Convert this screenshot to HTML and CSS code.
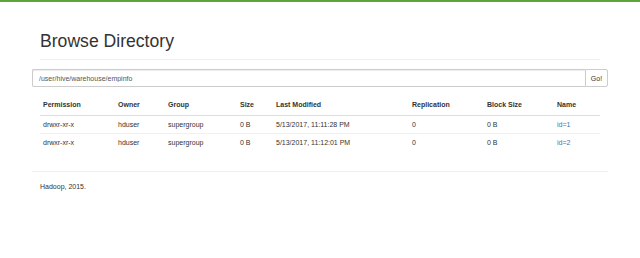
FILE: index.html
```html
<!DOCTYPE html>
<html lang="en">
<head>
    <meta charset="UTF-8">
    <meta name="viewport" content="width=device-width, initial-scale=1.0">
    <title>Browsing HDFS</title>
    <link rel="stylesheet" href="styles.css">
</head>
<body>

    <div class="topbar"></div>

    <div class="container">
        <div class="page-header">
            <h1>Browse Directory</h1>
        </div>

        <!-- Path box -->
        <form class="path-form" onsubmit="return false;">
            <input type="text" class="path-input" value="/user/hive/warehouse/empinfo">
            <button class="go-btn">Go!</button>
        </form>

        <!-- Directory listing -->
        <table class="listing">
            <thead>
                <tr>
                    <th class="col-perm">Permission</th>
                    <th class="col-owner">Owner</th>
                    <th class="col-group">Group</th>
                    <th class="col-size">Size</th>
                    <th class="col-mod">Last Modified</th>
                    <th class="col-rep">Replication</th>
                    <th class="col-block">Block Size</th>
                    <th class="col-name">Name</th>
                </tr>
            </thead>
            <tbody>
                <tr>
                    <td>drwxr-xr-x</td>
                    <td>hduser</td>
                    <td>supergroup</td>
                    <td>0 B</td>
                    <td>5/13/2017, 11:11:28 PM</td>
                    <td>0</td>
                    <td>0 B</td>
                    <td><a href="#">id=1</a></td>
                </tr>
                <tr>
                    <td>drwxr-xr-x</td>
                    <td>hduser</td>
                    <td>supergroup</td>
                    <td>0 B</td>
                    <td>5/13/2017, 11:12:01 PM</td>
                    <td>0</td>
                    <td>0 B</td>
                    <td><a href="#">id=2</a></td>
                </tr>
            </tbody>
        </table>

        <hr class="footer-rule">
        <p class="footer">Hadoop, 2015.</p>
    </div>

</body>
</html>
```

FILE: styles.css
```css
body {
    font-family: 'Liberation Sans', Arial, sans-serif;
    font-size: 7px;
    line-height: 10px;
    color: #333;
    background-color: #fff;
    margin: 0;
    padding: 0;
}

.topbar {
    height: 2px;
    background-color: #5fa33e; /* Hadoop green */
}

.container {
    width: 576px;
    margin: 0 32px;
}

.page-header {
    margin: 0 8px;
    padding-bottom: 4px;
    border-bottom: 1px solid #eee;
}

h1 {
    font-size: 17.6px;
    font-weight: 500;
    line-height: 20px;
    margin: 29px 0 4px;
    color: #333;
}

.path-form {
    display: flex;
    margin-top: 9px;
}

.path-input {
    flex: 1;
    height: 18px;
    box-sizing: border-box;
    padding: 0 6px;
    font-family: inherit;
    font-size: 7px;
    color: #555;
    border: 1px solid #ccc;
    border-right: none;
    border-radius: 2px 0 0 2px;
    box-shadow: inset 0 1px 1px rgba(0, 0, 0, 0.075);
}

.go-btn {
    width: 23px;
    height: 18px;
    box-sizing: border-box;
    padding: 0;
    font-family: inherit;
    font-size: 7px;
    color: #333;
    background-color: #fff;
    border: 1px solid #ccc;
    border-radius: 0 2px 2px 0;
    cursor: pointer;
}

.listing {
    width: 560px;
    margin: 8px 8px 0;
    border-collapse: collapse;
    table-layout: fixed;
}

.listing th,
.listing td {
    box-sizing: border-box;
    text-align: left;
    padding: 4px 3px;
    vertical-align: top;
    white-space: nowrap;
}

.listing th {
    font-weight: bold;
    padding-top: 5px;
    padding-bottom: 5px;
    border-bottom: 1px solid #ddd;
}

.listing td {
    line-height: 9px;
    border-top: 1px solid #f0f0f0;
}

.listing a {
    color: #337ab7;
    text-decoration: none;
}

.col-perm { width: 75px; }
.col-owner { width: 50px; }
.col-group { width: 72px; }
.col-size { width: 36px; }
.col-mod { width: 136px; }
.col-rep { width: 75px; }
.col-block { width: 70px; }
.col-name { width: 46px; }

.footer-rule {
    margin: 20px 0 0;
    border: 0;
    border-top: 1px solid #eee;
}

.footer {
    margin: 10px 8px;
}
```
